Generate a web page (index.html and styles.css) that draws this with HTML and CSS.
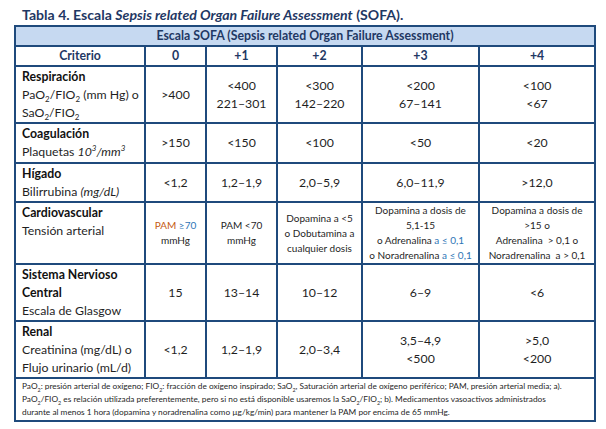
FILE: index.html
```html
<!DOCTYPE html>
<html lang="es">
<head>
<meta charset="utf-8">
<title>Tabla 4. Escala SOFA</title>
<link rel="stylesheet" href="styles.css">
</head>
<body>
<div class="page">
  <h1 class="title">Tabla 4. Escala <i>Sepsis related Organ Failure Assessment</i> (SOFA).</h1>
  <table class="sofa">
    <colgroup>
      <col class="c-crit">
      <col class="c-0">
      <col class="c-1">
      <col class="c-2">
      <col class="c-3">
      <col class="c-4">
    </colgroup>
    <tr class="r-band">
      <th colspan="6" class="band">Escala SOFA (Sepsis related Organ Failure Assessment)</th>
    </tr>
    <tr class="r-head">
      <th>Criterio</th>
      <th>0</th>
      <th>+1</th>
      <th>+2</th>
      <th>+3</th>
      <th>+4</th>
    </tr>
    <tr class="r-resp">
      <td class="crit"><b>Respiración</b><br>PaO<sub>2</sub>/FIO<sub>2</sub> (mm Hg) o<br>SaO<sub>2</sub>/FIO<sub>2</sub></td>
      <td>&gt;400</td>
      <td>&lt;400<br>221–301</td>
      <td>&lt;300<br>142–220</td>
      <td>&lt;200<br>67–141</td>
      <td>&lt;100<br>&lt;67</td>
    </tr>
    <tr class="r-coag">
      <td class="crit"><b>Coagulación</b><br>Plaquetas <i>10<sup>3</sup>/mm<sup>3</sup></i></td>
      <td>&gt;150</td>
      <td>&lt;150</td>
      <td>&lt;100</td>
      <td>&lt;50</td>
      <td>&lt;20</td>
    </tr>
    <tr class="r-hig">
      <td class="crit"><b>Hígado</b><br>Bilirrubina <i>(mg/dL)</i></td>
      <td>&lt;1,2</td>
      <td>1,2–1,9</td>
      <td>2,0–5,9</td>
      <td>6,0–11,9</td>
      <td>&gt;12,0</td>
    </tr>
    <tr class="r-card">
      <td class="crit"><b>Cardiovascular</b><br>Tensión arterial</td>
      <td class="small"><span class="orange">PAM</span> <span class="blue">≥70</span><br>mmHg</td>
      <td class="small">PAM &lt;70<br>mmHg</td>
      <td class="small">Dopamina a &lt;5<br>o Dobutamina a<br>cualquier dosis</td>
      <td class="small">Dopamina a dosis de<br>5,1-15<br>o Adrenalina <span class="blue">a ≤ 0,1</span><br>o Noradrenalina <span class="blue">a ≤ 0,1</span></td>
      <td class="small">Dopamina a dosis de<br>&gt;15 o<br>Adrenalina&nbsp; &gt; 0,1 o<br>Noradrenalina&nbsp; a &gt; 0,1</td>
    </tr>
    <tr class="r-snc">
      <td class="crit"><b>Sistema Nervioso<br>Central</b><br>Escala de Glasgow</td>
      <td>15</td>
      <td>13–14</td>
      <td>10–12</td>
      <td>6–9</td>
      <td>&lt;6</td>
    </tr>
    <tr class="r-ren">
      <td class="crit"><b>Renal</b><br>Creatinina (mg/dL) o<br>Flujo urinario (mL/d)</td>
      <td>&lt;1,2</td>
      <td>1,2–1,9</td>
      <td>2,0–3,4</td>
      <td>3,5–4,9<br>&lt;500</td>
      <td>&gt;5,0<br>&lt;200</td>
    </tr>
    <tr class="r-foot">
      <td colspan="6" class="foot">PaO<sub>2</sub>: presión arterial de oxígeno; FIO<sub>2</sub>: fracción de oxígeno inspirado; SaO<sub>2</sub>, Saturación arterial de oxígeno periférico; PAM, presión arterial media; a).<br>PaO<sub>2</sub>/FIO<sub>2</sub> es relación utilizada preferentemente, pero si no está disponible usaremos la SaO<sub>2</sub>/FIO<sub>2</sub>; b). Medicamentos vasoactivos administrados<br>durante al menos 1 hora (dopamina y noradrenalina como µg/kg/min) para mantener la PAM por encima de 65 mmHg.</td>
    </tr>
  </table>
</div>
</body>
</html>
```

FILE: styles.css
```css
html, body {
  margin: 0;
  padding: 0;
  background: #ffffff;
}

body {
  font-family: Lato, "Open Sans", "Liberation Sans", sans-serif;
  color: #1f1f1f;
}

.page {
  padding: 5px 0 0 14px;
}

.title {
  margin: 0 0 0 8px;
  font-size: 14.1px;
  line-height: 20px;
  font-weight: 700;
  color: #1f3864;
}

.sofa {
  border-collapse: collapse;
  table-layout: fixed;
  width: 582px;
  font-size: 12.3px;
  line-height: 18px;
}

.sofa th,
.sofa td {
  border: 2px solid #1f4a7c;
  padding: 0 2px;
  text-align: center;
  vertical-align: middle;
  white-space: nowrap;
}

.c-crit { width: 130px; }
.c-0 { width: 61px; }
.c-1 { width: 71px; }
.c-2 { width: 85px; }
.c-3 { width: 117px; }
.c-4 { width: 116px; }

.sofa th {
  color: #1f3864;
  font-weight: 700;
}

.band {
  background: #c6d9f1;
}

.r-band { height: 19px; }
.r-head { height: 20px; }
.r-resp { height: 57px; }
.r-coag { height: 40px; }
.r-hig { height: 38px; }
.r-card { height: 61px; }
.r-snc { height: 55px; }
.r-ren { height: 57px; }
.r-foot { height: 41px; }

.sofa td.crit {
  text-align: left;
  vertical-align: top;
  padding: 1px 2px 0 6px;
}

.crit b {
  font-weight: 700;
  color: #111111;
}

.sofa td.small {
  font-size: 10px;
  line-height: 15px;
  padding: 0 1px;
}

.orange { color: #c55a11; }
.blue { color: #2e75b6; }

sub, sup {
  font-size: 0.65em;
  line-height: 0;
}

.sofa td.foot {
  text-align: left;
  font-size: 8.3px;
  line-height: 13px;
  padding: 1px 6px;
  vertical-align: middle;
}
```
